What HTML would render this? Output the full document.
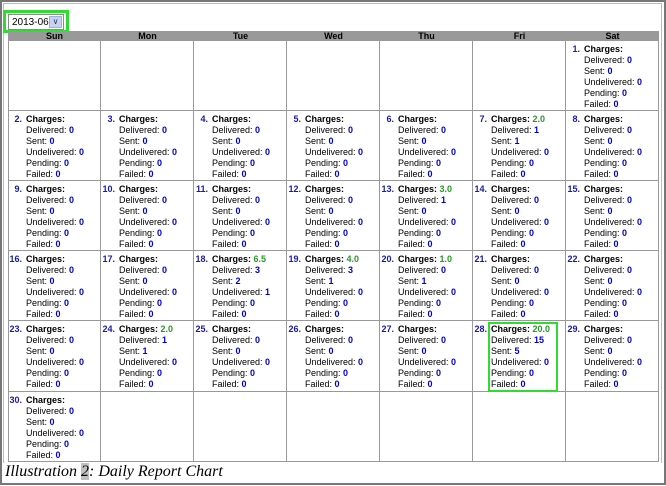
<!DOCTYPE html>
<html><head><style>
*{margin:0;padding:0;box-sizing:border-box}
body{width:666px;height:486px;background:#fff;position:relative;overflow:hidden;font-family:"Liberation Sans",Tahoma,sans-serif;font-size:9px;color:#000}
.frame{position:absolute;left:0;top:0;width:666px;height:485px;border:2px solid #777;}
.frame2{position:absolute;left:3px;top:3px;width:659px;height:460px;border:1px solid #bbb;border-bottom:none}
.sel{position:absolute;left:3px;top:10px;width:66px;height:23px;border:3px solid #2fdc2f}
.selin{position:absolute;left:8px;top:14px;width:56px;height:16px;border:1px solid #8a8a8a;background:#fff;font-size:10px;padding:2px 0 0 3px}
.arr{position:absolute;right:1px;top:1px;width:13px;height:12px;background:#c5d3f0;border:1px solid #9db0dc;color:#335;font-size:8px;text-align:center;line-height:10px}
.hd{position:absolute;top:31px;height:10px;background:#999;font-weight:bold;text-align:center;line-height:10px;font-size:9px}
.c{position:absolute;width:93px;border-right:1px solid #999;border-bottom:1px solid #999}
.n{position:absolute;right:78px;top:3px;font-weight:bold;color:#1a1aa8;line-height:11px}
.t{position:absolute;left:18px;top:3px;line-height:11px;white-space:nowrap}
.t i{font-style:normal;font-weight:bold;color:#0000cc}
.t u{text-decoration:none;font-weight:bold;color:#2a962a}
.cap{position:absolute;left:5px;top:463px;font-family:"Liberation Serif",serif;font-style:italic;font-size:16px;line-height:18px}
.cap span{background:#c0c0c0}
.hl{position:absolute;left:488px;top:322px;width:70px;height:70px;border:2px solid #2fdc2f}
</style></head><body>
<div class="frame"></div><div class="frame2"></div>
<div class="selin">2013-06<div class="arr">&#8744;</div></div>
<div class="sel"></div>
<div style="position:absolute;left:8px;top:41px;width:1px;height:421px;background:#999"></div>
<div class="hd" style="left:8px;width:93px">Sun</div>
<div class="hd" style="left:101px;width:93px">Mon</div>
<div class="hd" style="left:194px;width:93px">Tue</div>
<div class="hd" style="left:287px;width:93px">Wed</div>
<div class="hd" style="left:380px;width:93px">Thu</div>
<div class="hd" style="left:473px;width:93px">Fri</div>
<div class="hd" style="left:566px;width:93px">Sat</div>

<div class="c" style="left:8px;top:41px;height:70px"></div>
<div class="c" style="left:101px;top:41px;height:70px"></div>
<div class="c" style="left:194px;top:41px;height:70px"></div>
<div class="c" style="left:287px;top:41px;height:70px"></div>
<div class="c" style="left:380px;top:41px;height:70px"></div>
<div class="c" style="left:473px;top:41px;height:70px"></div>
<div class="c" style="left:566px;top:41px;height:70px"><b class="n">1.</b><div class="t"><b>Charges:</b><br>Delivered: <i>0</i><br>Sent: <i>0</i><br>Undelivered: <i>0</i><br>Pending: <i>0</i><br>Failed: <i>0</i></div></div>
<div class="c" style="left:8px;top:111px;height:70px"><b class="n">2.</b><div class="t"><b>Charges:</b><br>Delivered: <i>0</i><br>Sent: <i>0</i><br>Undelivered: <i>0</i><br>Pending: <i>0</i><br>Failed: <i>0</i></div></div>
<div class="c" style="left:101px;top:111px;height:70px"><b class="n">3.</b><div class="t"><b>Charges:</b><br>Delivered: <i>0</i><br>Sent: <i>0</i><br>Undelivered: <i>0</i><br>Pending: <i>0</i><br>Failed: <i>0</i></div></div>
<div class="c" style="left:194px;top:111px;height:70px"><b class="n">4.</b><div class="t"><b>Charges:</b><br>Delivered: <i>0</i><br>Sent: <i>0</i><br>Undelivered: <i>0</i><br>Pending: <i>0</i><br>Failed: <i>0</i></div></div>
<div class="c" style="left:287px;top:111px;height:70px"><b class="n">5.</b><div class="t"><b>Charges:</b><br>Delivered: <i>0</i><br>Sent: <i>0</i><br>Undelivered: <i>0</i><br>Pending: <i>0</i><br>Failed: <i>0</i></div></div>
<div class="c" style="left:380px;top:111px;height:70px"><b class="n">6.</b><div class="t"><b>Charges:</b><br>Delivered: <i>0</i><br>Sent: <i>0</i><br>Undelivered: <i>0</i><br>Pending: <i>0</i><br>Failed: <i>0</i></div></div>
<div class="c" style="left:473px;top:111px;height:70px"><b class="n">7.</b><div class="t"><b>Charges: <u>2.0</u></b><br>Delivered: <i>1</i><br>Sent: <i>1</i><br>Undelivered: <i>0</i><br>Pending: <i>0</i><br>Failed: <i>0</i></div></div>
<div class="c" style="left:566px;top:111px;height:70px"><b class="n">8.</b><div class="t"><b>Charges:</b><br>Delivered: <i>0</i><br>Sent: <i>0</i><br>Undelivered: <i>0</i><br>Pending: <i>0</i><br>Failed: <i>0</i></div></div>
<div class="c" style="left:8px;top:181px;height:70px"><b class="n">9.</b><div class="t"><b>Charges:</b><br>Delivered: <i>0</i><br>Sent: <i>0</i><br>Undelivered: <i>0</i><br>Pending: <i>0</i><br>Failed: <i>0</i></div></div>
<div class="c" style="left:101px;top:181px;height:70px"><b class="n">10.</b><div class="t"><b>Charges:</b><br>Delivered: <i>0</i><br>Sent: <i>0</i><br>Undelivered: <i>0</i><br>Pending: <i>0</i><br>Failed: <i>0</i></div></div>
<div class="c" style="left:194px;top:181px;height:70px"><b class="n">11.</b><div class="t"><b>Charges:</b><br>Delivered: <i>0</i><br>Sent: <i>0</i><br>Undelivered: <i>0</i><br>Pending: <i>0</i><br>Failed: <i>0</i></div></div>
<div class="c" style="left:287px;top:181px;height:70px"><b class="n">12.</b><div class="t"><b>Charges:</b><br>Delivered: <i>0</i><br>Sent: <i>0</i><br>Undelivered: <i>0</i><br>Pending: <i>0</i><br>Failed: <i>0</i></div></div>
<div class="c" style="left:380px;top:181px;height:70px"><b class="n">13.</b><div class="t"><b>Charges: <u>3.0</u></b><br>Delivered: <i>1</i><br>Sent: <i>0</i><br>Undelivered: <i>0</i><br>Pending: <i>0</i><br>Failed: <i>0</i></div></div>
<div class="c" style="left:473px;top:181px;height:70px"><b class="n">14.</b><div class="t"><b>Charges:</b><br>Delivered: <i>0</i><br>Sent: <i>0</i><br>Undelivered: <i>0</i><br>Pending: <i>0</i><br>Failed: <i>0</i></div></div>
<div class="c" style="left:566px;top:181px;height:70px"><b class="n">15.</b><div class="t"><b>Charges:</b><br>Delivered: <i>0</i><br>Sent: <i>0</i><br>Undelivered: <i>0</i><br>Pending: <i>0</i><br>Failed: <i>0</i></div></div>
<div class="c" style="left:8px;top:251px;height:70px"><b class="n">16.</b><div class="t"><b>Charges:</b><br>Delivered: <i>0</i><br>Sent: <i>0</i><br>Undelivered: <i>0</i><br>Pending: <i>0</i><br>Failed: <i>0</i></div></div>
<div class="c" style="left:101px;top:251px;height:70px"><b class="n">17.</b><div class="t"><b>Charges:</b><br>Delivered: <i>0</i><br>Sent: <i>0</i><br>Undelivered: <i>0</i><br>Pending: <i>0</i><br>Failed: <i>0</i></div></div>
<div class="c" style="left:194px;top:251px;height:70px"><b class="n">18.</b><div class="t"><b>Charges: <u>6.5</u></b><br>Delivered: <i>3</i><br>Sent: <i>2</i><br>Undelivered: <i>1</i><br>Pending: <i>0</i><br>Failed: <i>0</i></div></div>
<div class="c" style="left:287px;top:251px;height:70px"><b class="n">19.</b><div class="t"><b>Charges: <u>4.0</u></b><br>Delivered: <i>3</i><br>Sent: <i>1</i><br>Undelivered: <i>0</i><br>Pending: <i>0</i><br>Failed: <i>0</i></div></div>
<div class="c" style="left:380px;top:251px;height:70px"><b class="n">20.</b><div class="t"><b>Charges: <u>1.0</u></b><br>Delivered: <i>0</i><br>Sent: <i>1</i><br>Undelivered: <i>0</i><br>Pending: <i>0</i><br>Failed: <i>0</i></div></div>
<div class="c" style="left:473px;top:251px;height:70px"><b class="n">21.</b><div class="t"><b>Charges:</b><br>Delivered: <i>0</i><br>Sent: <i>0</i><br>Undelivered: <i>0</i><br>Pending: <i>0</i><br>Failed: <i>0</i></div></div>
<div class="c" style="left:566px;top:251px;height:70px"><b class="n">22.</b><div class="t"><b>Charges:</b><br>Delivered: <i>0</i><br>Sent: <i>0</i><br>Undelivered: <i>0</i><br>Pending: <i>0</i><br>Failed: <i>0</i></div></div>
<div class="c" style="left:8px;top:321px;height:71px"><b class="n">23.</b><div class="t"><b>Charges:</b><br>Delivered: <i>0</i><br>Sent: <i>0</i><br>Undelivered: <i>0</i><br>Pending: <i>0</i><br>Failed: <i>0</i></div></div>
<div class="c" style="left:101px;top:321px;height:71px"><b class="n">24.</b><div class="t"><b>Charges: <u>2.0</u></b><br>Delivered: <i>1</i><br>Sent: <i>1</i><br>Undelivered: <i>0</i><br>Pending: <i>0</i><br>Failed: <i>0</i></div></div>
<div class="c" style="left:194px;top:321px;height:71px"><b class="n">25.</b><div class="t"><b>Charges:</b><br>Delivered: <i>0</i><br>Sent: <i>0</i><br>Undelivered: <i>0</i><br>Pending: <i>0</i><br>Failed: <i>0</i></div></div>
<div class="c" style="left:287px;top:321px;height:71px"><b class="n">26.</b><div class="t"><b>Charges:</b><br>Delivered: <i>0</i><br>Sent: <i>0</i><br>Undelivered: <i>0</i><br>Pending: <i>0</i><br>Failed: <i>0</i></div></div>
<div class="c" style="left:380px;top:321px;height:71px"><b class="n">27.</b><div class="t"><b>Charges:</b><br>Delivered: <i>0</i><br>Sent: <i>0</i><br>Undelivered: <i>0</i><br>Pending: <i>0</i><br>Failed: <i>0</i></div></div>
<div class="c" style="left:473px;top:321px;height:71px"><b class="n">28.</b><div class="t"><b>Charges: <u>20.0</u></b><br>Delivered: <i>15</i><br>Sent: <i>5</i><br>Undelivered: <i>0</i><br>Pending: <i>0</i><br>Failed: <i>0</i></div></div>
<div class="c" style="left:566px;top:321px;height:71px"><b class="n">29.</b><div class="t"><b>Charges:</b><br>Delivered: <i>0</i><br>Sent: <i>0</i><br>Undelivered: <i>0</i><br>Pending: <i>0</i><br>Failed: <i>0</i></div></div>
<div class="c" style="left:8px;top:392px;height:70px"><b class="n">30.</b><div class="t"><b>Charges:</b><br>Delivered: <i>0</i><br>Sent: <i>0</i><br>Undelivered: <i>0</i><br>Pending: <i>0</i><br>Failed: <i>0</i></div></div>
<div class="c" style="left:101px;top:392px;height:70px"></div>
<div class="c" style="left:194px;top:392px;height:70px"></div>
<div class="c" style="left:287px;top:392px;height:70px"></div>
<div class="c" style="left:380px;top:392px;height:70px"></div>
<div class="c" style="left:473px;top:392px;height:70px"></div>
<div class="c" style="left:566px;top:392px;height:70px"></div>
<div class="hl"></div>
<div class="cap">Illustration <span>2</span>: Daily Report Chart</div>
</body></html>
